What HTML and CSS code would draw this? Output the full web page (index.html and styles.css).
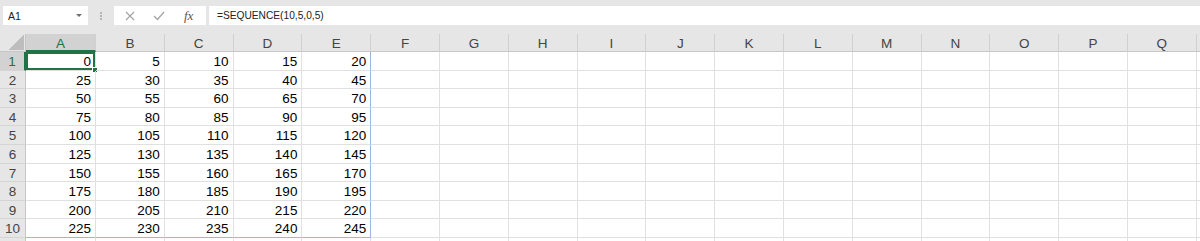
FILE: index.html
```html
<!DOCTYPE html>
<html lang="en">
<head>
  <meta charset="UTF-8">
  <title>Sheet1</title>
  <link rel="stylesheet" href="styles.css">
</head>
<body>

  <div class="formula-bar">
    <div class="name-box">
      <span>A1</span>
      <span class="caret"></span>
    </div>
    <div class="grip"><i></i><i></i><i></i></div>
    <div class="fx-buttons">
      <svg class="btn-cancel" width="10" height="10" viewBox="0 0 10 10">
        <path d="M1 1 L9 9 M9 1 L1 9" stroke="#a3a3a3" stroke-width="1.1" fill="none"/>
      </svg>
      <svg class="btn-enter" width="12" height="10" viewBox="0 0 12 10">
        <path d="M1 5 L4.5 8.5 L11 1" stroke="#a3a3a3" stroke-width="1.2" fill="none"/>
      </svg>
      <span class="fx">fx</span>
    </div>
    <div class="formula">=SEQUENCE(10,5,0,5)</div>
  </div>

  <div class="sheet" id="sheet"></div>

  <script>
    const sheet = document.getElementById('sheet');
    // last column only peeks in at the right edge, so it has no letter
    const letters = 'ABCDEFGHIJKLMNOPQ'.split('').concat(['']);

    function addCell(cls, text) {
      const div = document.createElement('div');
      div.className = cls;
      if (text !== undefined && text !== '') div.textContent = text;
      sheet.appendChild(div);
      return div;
    }

    // header row
    addCell('corner');
    letters.forEach((l, i) => addCell('col-head' + (i === 0 ? ' sel' : ''), l));

    // =SEQUENCE(10,5,0,5)
    for (let r = 1; r <= 11; r++) {
      addCell('row-head' + (r === 1 ? ' sel' : ''), r <= 10 ? r : '');
      letters.forEach((l, c) => {
        let cls = 'cell';
        let val;
        if (r <= 10 && c < 5) {
          val = ((r - 1) * 5 + c) * 5;
          if (c === 4) cls += ' spill-right';
          if (r === 10) cls += ' spill-bottom';
        }
        if (r === 1 && c === 0) cls += ' active';
        addCell(cls, val);
      });
    }
  </script>

</body>
</html>
```

FILE: styles.css
```css
body {
  margin: 0;
  width: 1200px;
  height: 241px;
  overflow: hidden;
  font-family: "Liberation Sans", Arial, sans-serif;
  background-color: #fff;
}
.formula-bar {
  display: flex;
  align-items: flex-start;
  height: 34px;
  padding-top: 6px;
  box-sizing: border-box;
  background-color: #e6e6e6;
}
.name-box {
  margin-left: 3px;
  width: 85px;
  height: 19px;
  padding: 0 6px 0 5px;
  box-sizing: border-box;
  display: flex;
  align-items: center;
  justify-content: space-between;
  background-color: #fff;
  font-size: 10.5px;
  color: #222;
}
.caret {
  width: 0;
  height: 0;
  border-left: 3px solid transparent;
  border-right: 3px solid transparent;
  border-top: 3px solid #707070;
}
.grip {
  width: 26px;
  height: 19px;
  display: flex;
  flex-direction: column;
  align-items: center;
  justify-content: center;
  gap: 1px;
}
.grip i {
  width: 2px;
  height: 2px;
  background-color: #b5b5b5;
}
.fx-buttons {
  width: 92px;
  height: 19px;
  display: flex;
  align-items: center;
  background-color: #fff;
}
.btn-cancel {
  margin-left: 11px;
}
.btn-enter {
  margin-left: 18px;
}
.fx {
  margin-left: 19px;
  font-family: "Liberation Serif", "DejaVu Serif", serif;
  font-style: italic;
  font-size: 13px;
  color: #555;
}
.formula {
  flex: 1;
  margin-left: 3px;
  height: 19px;
  padding-left: 8px;
  line-height: 19px;
  background-color: #fff;
  font-size: 10.2px;
  color: #222;
}
.sheet {
  display: grid;
  grid-template-columns: 26px 70px repeat(17, 68.8px);
  grid-template-rows: 18px repeat(11, 18.6px);
}
.corner {
  background-color: #e6e6e6;
  border-right: 1px solid #c6c6c6;
  border-bottom: 1px solid #c6c6c6;
  background-image: linear-gradient(to bottom right, transparent 50%, #bdbdbd 50%);
  background-size: 16px 15px;
  background-position: right 1px bottom 1px;
  background-repeat: no-repeat;
}
.col-head {
  box-sizing: border-box;
  padding-top: 1px;
  background-color: #e6e6e6;
  border-right: 1px solid #d0d0d0;
  border-bottom: 1px solid #c6c6c6;
  text-align: center;
  font-size: 13.5px;
  line-height: 17px;
  color: #444;
}
.col-head.sel {
  background-color: #d2d2d2;
  border-bottom: 2px solid #217346;
  color: #217346;
}
.row-head {
  box-sizing: border-box;
  background-color: #e6e6e6;
  border-right: 1px solid #c6c6c6;
  border-bottom: 1px solid #d4d4d4;
  text-align: center;
  font-size: 13.5px;
  line-height: 19px;
  color: #444;
}
.row-head.sel {
  background-color: #d2d2d2;
  border-right: 2px solid #217346;
  color: #217346;
}
.cell {
  position: relative;
  box-sizing: border-box;
  padding-right: 4px;
  border-right: 1px solid #e0e0e0;
  border-bottom: 1px solid #e0e0e0;
  text-align: right;
  font-size: 13.5px;
  line-height: 19px;
  color: #000;
}
.cell.spill-right {
  border-right-color: #9db6e0;
}
.cell.spill-bottom {
  border-bottom-color: #9db6e0;
}
.cell.active {
  box-shadow: inset 0 0 0 2px #217346;
}
.cell.active::after {
  content: "";
  position: absolute;
  right: -3px;
  bottom: -3px;
  width: 4px;
  height: 4px;
  background-color: #217346;
  border: 1px solid #fff;
}
```
